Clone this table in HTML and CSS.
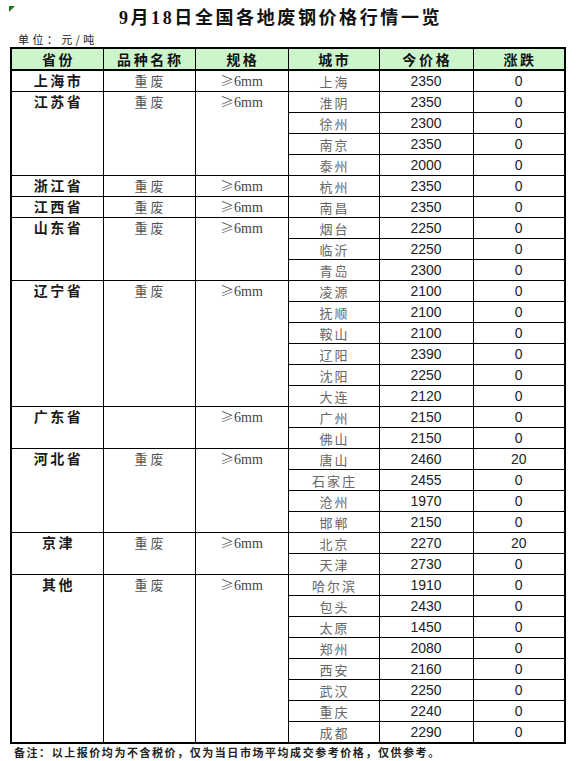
FILE: index.html
```html
<!DOCTYPE html>
<html lang="zh">
<head>
<meta charset="utf-8">
<title>9月18日全国各地废钢价格行情一览</title>
<link rel="stylesheet" href="styles.css">
</head>
<body>
<div class="page">
  <div class="title-row">
    <span class="marker"></span>
    <h1 class="title">9月18日全国各地废钢价格行情一览</h1>
  </div>
  <div class="unit">单位：元/吨</div>
  <table class="prices">
    <colgroup>
      <col class="c1"><col class="c2"><col class="c3"><col class="c4"><col class="c5"><col class="c6">
    </colgroup>
    <thead>
      <tr><th>省份</th><th>品种名称</th><th>规格</th><th>城市</th><th>今价格</th><th>涨跌</th></tr>
    </thead>
    <tbody>
      <tr><td class="prov">上海市</td><td class="kind">重废</td><td class="spec"><span class="ge">≥</span>6mm</td><td class="city">上海</td><td class="num">2350</td><td class="num">0</td></tr>

      <tr><td class="prov" rowspan="4">江苏省</td><td class="kind" rowspan="4">重废</td><td class="spec" rowspan="4"><span class="ge">≥</span>6mm</td><td class="city">淮阴</td><td class="num">2350</td><td class="num">0</td></tr>
      <tr><td class="city">徐州</td><td class="num">2300</td><td class="num">0</td></tr>
      <tr><td class="city">南京</td><td class="num">2350</td><td class="num">0</td></tr>
      <tr><td class="city">泰州</td><td class="num">2000</td><td class="num">0</td></tr>

      <tr><td class="prov">浙江省</td><td class="kind">重废</td><td class="spec"><span class="ge">≥</span>6mm</td><td class="city">杭州</td><td class="num">2350</td><td class="num">0</td></tr>
      <tr><td class="prov">江西省</td><td class="kind">重废</td><td class="spec"><span class="ge">≥</span>6mm</td><td class="city">南昌</td><td class="num">2350</td><td class="num">0</td></tr>

      <tr><td class="prov" rowspan="3">山东省</td><td class="kind" rowspan="3">重废</td><td class="spec" rowspan="3"><span class="ge">≥</span>6mm</td><td class="city">烟台</td><td class="num">2250</td><td class="num">0</td></tr>
      <tr><td class="city">临沂</td><td class="num">2250</td><td class="num">0</td></tr>
      <tr><td class="city">青岛</td><td class="num">2300</td><td class="num">0</td></tr>

      <tr><td class="prov" rowspan="6">辽宁省</td><td class="kind" rowspan="6">重废</td><td class="spec" rowspan="6"><span class="ge">≥</span>6mm</td><td class="city">凌源</td><td class="num">2100</td><td class="num">0</td></tr>
      <tr><td class="city">抚顺</td><td class="num">2100</td><td class="num">0</td></tr>
      <tr><td class="city">鞍山</td><td class="num">2100</td><td class="num">0</td></tr>
      <tr><td class="city">辽阳</td><td class="num">2390</td><td class="num">0</td></tr>
      <tr><td class="city">沈阳</td><td class="num">2250</td><td class="num">0</td></tr>
      <tr><td class="city">大连</td><td class="num">2120</td><td class="num">0</td></tr>

      <tr><td class="prov" rowspan="2">广东省</td><td class="kind" rowspan="2"></td><td class="spec" rowspan="2"><span class="ge">≥</span>6mm</td><td class="city">广州</td><td class="num">2150</td><td class="num">0</td></tr>
      <tr><td class="city">佛山</td><td class="num">2150</td><td class="num">0</td></tr>

      <tr><td class="prov" rowspan="4">河北省</td><td class="kind" rowspan="4">重废</td><td class="spec" rowspan="4"><span class="ge">≥</span>6mm</td><td class="city">唐山</td><td class="num">2460</td><td class="num">20</td></tr>
      <tr><td class="city">石家庄</td><td class="num">2455</td><td class="num">0</td></tr>
      <tr><td class="city">沧州</td><td class="num">1970</td><td class="num">0</td></tr>
      <tr><td class="city">邯郸</td><td class="num">2150</td><td class="num">0</td></tr>

      <tr><td class="prov" rowspan="2">京津</td><td class="kind" rowspan="2">重废</td><td class="spec" rowspan="2"><span class="ge">≥</span>6mm</td><td class="city">北京</td><td class="num">2270</td><td class="num">20</td></tr>
      <tr><td class="city">天津</td><td class="num">2730</td><td class="num">0</td></tr>

      <tr><td class="prov" rowspan="8">其他</td><td class="kind" rowspan="8">重废</td><td class="spec" rowspan="8"><span class="ge">≥</span>6mm</td><td class="city">哈尔滨</td><td class="num">1910</td><td class="num">0</td></tr>
      <tr><td class="city">包头</td><td class="num">2430</td><td class="num">0</td></tr>
      <tr><td class="city">太原</td><td class="num">1450</td><td class="num">0</td></tr>
      <tr><td class="city">郑州</td><td class="num">2080</td><td class="num">0</td></tr>
      <tr><td class="city">西安</td><td class="num">2160</td><td class="num">0</td></tr>
      <tr><td class="city">武汉</td><td class="num">2250</td><td class="num">0</td></tr>
      <tr><td class="city">重庆</td><td class="num">2240</td><td class="num">0</td></tr>
      <tr><td class="city">成都</td><td class="num">2290</td><td class="num">0</td></tr>
    </tbody>
  </table>
  <p class="note">备注：以上报价均为不含税价，仅为当日市场平均成交参考价格，仅供参考。</p>
</div>
</body>
</html>
```
FILE: styles.css
```css
html, body {
  margin: 0;
  padding: 0;
  background: #ffffff;
}

.page {
  width: 577px;
  height: 761px;
  font-family: "Noto Sans CJK SC", "Liberation Sans", sans-serif;
  color: #1a1a1a;
}

.title-row {
  position: relative;
  height: 32px;
}

.marker {
  position: absolute;
  left: 9px;
  top: 6px;
  width: 0;
  height: 0;
  border-top: 6px solid #1f7a1f;
  border-right: 6px solid transparent;
}

.title {
  margin: 0;
  padding-top: 4px;
  padding-right: 16px;
  line-height: 28px;
  height: 28px;
  font-size: 18px;
  font-weight: bold;
  letter-spacing: 2.6px;
  text-align: center;
  color: #111;
  font-family: "Liberation Serif", "Noto Sans CJK SC", serif;
}

.unit {
  height: 15px;
  line-height: 14px;
  padding-left: 18px;
  font-size: 11px;
  letter-spacing: 3.4px;
  color: #222;
}

.prices {
  margin-left: 10px;
  width: 554px;
  border-collapse: collapse;
  table-layout: fixed;
  border: 2px solid #000;
}

.c1 { width: 92px; }
.c2 { width: 92px; }
.c3 { width: 93px; }
.c4 { width: 91px; }
.c5 { width: 94px; }
.c6 { width: 92px; }

.prices tr {
  height: 21px;
}

.prices th,
.prices td {
  border: 1px solid #000;
  padding: 0;
  height: 20px;
  line-height: 19px;
  text-align: center;
  overflow: hidden;
  white-space: nowrap;
}

.prices th {
  background: #ccf5cc;
  font-size: 14px;
  font-weight: bold;
  letter-spacing: 2.7px;
  padding-left: 2.7px;
  color: #111;
  border-bottom: 2px solid #000;
}

.prices td.prov {
  vertical-align: top;
  font-size: 14px;
  font-weight: bold;
  letter-spacing: 2.5px;
  padding-left: 2.5px;
  color: #1a1a1a;
}

.prices td.kind {
  vertical-align: top;
  font-size: 13px;
  letter-spacing: 3px;
  padding-left: 3px;
  color: #555;
}

.prices td.spec {
  vertical-align: top;
  font-size: 14px;
  font-family: "Liberation Serif", "DejaVu Serif", serif;
  color: #444;
}

.prices td.spec .ge {
  font-family: "Noto Sans CJK SC", sans-serif;
  font-size: 14px;
  font-weight: 300;
}

.prices td.city {
  font-size: 13px;
  letter-spacing: 2px;
  padding-left: 2px;
  color: #666;
}

.prices td.num {
  font-family: "Liberation Sans", Arial, sans-serif;
  font-size: 14px;
  color: #222;
}

.note {
  margin: 0;
  padding-left: 14px;
  line-height: 17px;
  font-size: 11px;
  font-weight: bold;
  letter-spacing: 1.55px;
  color: #222;
}
```
